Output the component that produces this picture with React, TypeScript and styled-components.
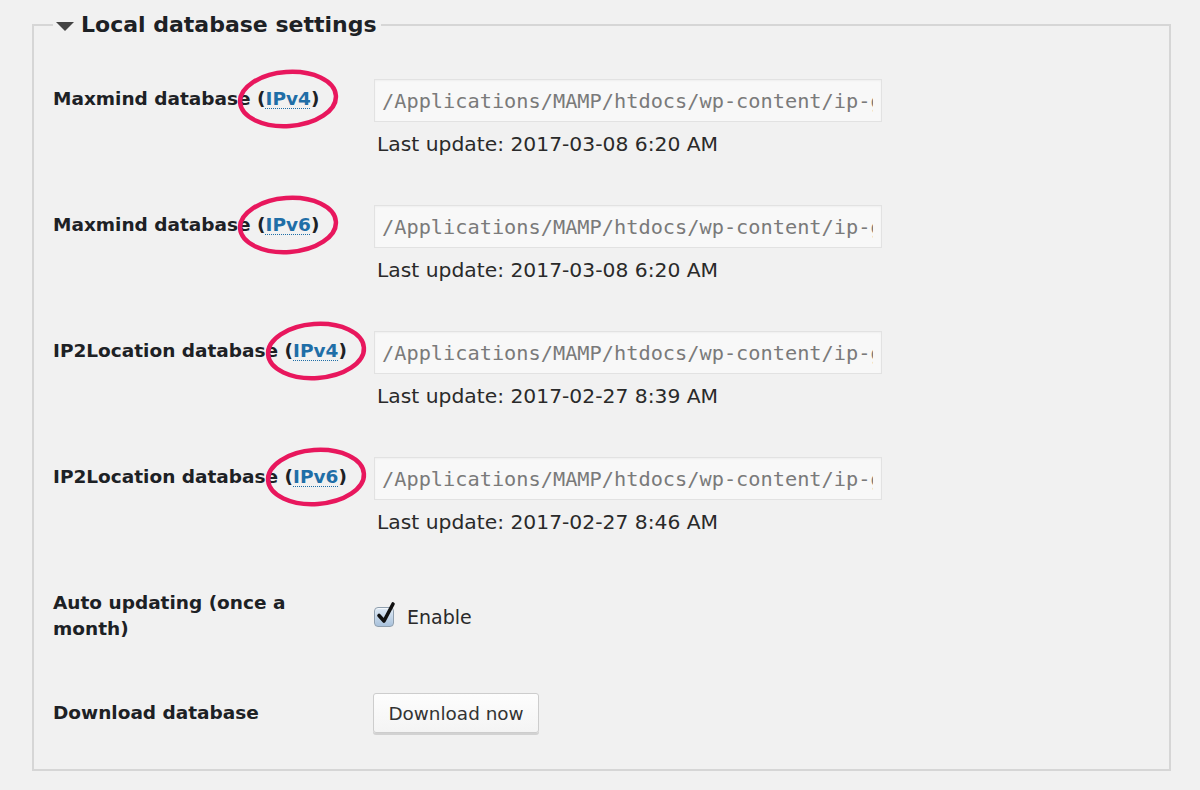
import React from "react";
import styled, { createGlobalStyle } from "styled-components";

const Global = createGlobalStyle`
  html, body { margin: 0; padding: 0; background: #f1f1f1; }
  body { font-family: "DejaVu Sans", "Liberation Sans", sans-serif; color: #23282d; }
`;

const Page = styled.div`
  padding: 11px 0 0 32px;
  width: 1139px;
`;

const Fieldset = styled.fieldset`
  margin: 0;
  border: 2px solid #d6d6d6;
  padding: 40px 20px 36px 19px;
  min-width: 0;
`;

const Legend = styled.legend`
  display: flex;
  align-items: center;
  gap: 7px;
  padding: 0 4px 0 3px;
  font-size: 22px;
  line-height: 28px;
  font-weight: bold;
  color: #1d2125;
`;

const Triangle = styled.span`
  width: 0;
  height: 0;
  border-left: 9px solid transparent;
  border-right: 9px solid transparent;
  border-top: 9px solid #444;
  margin-top: 2px;
`;

const Rows = styled.div`
  display: flex;
  flex-direction: column;
  gap: 49px;
`;

const Row = styled.div<{ $extraTop?: number }>`
  display: flex;
  align-items: flex-start;
  margin-top: ${(p) => p.$extraTop ?? 0}px;
`;

const Label = styled.div<{ $maxWidth?: number }>`
  width: 321px;
  flex: none;
  box-sizing: border-box;
  padding-top: 7px;
  font-size: 18.5px;
  line-height: 26px;
  font-weight: bold;
  color: #1d2125;
  white-space: ${(p) => (p.$maxWidth ? "normal" : "nowrap")};
  & > span.inner {
    display: inline-block;
    max-width: ${(p) => (p.$maxWidth ? `${p.$maxWidth}px` : "none")};
  }
`;

const LinkWrap = styled.span`
  position: relative;
  display: inline-block;
`;

const Link = styled.a`
  color: #1f6ea7;
  text-decoration: underline dotted #1f6ea7;
  text-underline-offset: 3px;
  text-decoration-thickness: 1px;
`;

const Circle = styled.svg`
  position: absolute;
  left: 50%;
  top: 50%;
  width: 104px;
  height: 64px;
  transform: translate(-50%, -50%) rotate(-4deg);
  overflow: visible;
  pointer-events: none;
`;

const Field = styled.div<{ $padTop?: number }>`
  display: flex;
  flex-direction: column;
  padding-top: ${(p) => p.$padTop ?? 0}px;
`;

const PathInput = styled.input`
  box-sizing: border-box;
  width: 508px;
  height: 43px;
  margin: 0;
  padding: 0 8px 0 7px;
  border: 1px solid #e2e2e2;
  background: #f8f8f8;
  font-family: "DejaVu Sans Mono", "Liberation Mono", monospace;
  font-size: 20.3px;
  color: #7a7a7a;
  outline: none;
  box-shadow: inset 0 1px 2px rgba(0, 0, 0, 0.04);
`;

const Updated = styled.div`
  margin-top: 10px;
  margin-left: 3px;
  font-size: 20.3px;
  line-height: 24px;
  color: #2a2a2a;
`;

const CheckLine = styled.label`
  display: flex;
  align-items: center;
  gap: 13px;
  height: 28px;
  font-size: 19px;
  color: #2a2a2a;
`;

const Box = styled.span`
  position: relative;
  display: inline-block;
  width: 20px;
  height: 20px;
  box-sizing: border-box;
  border: 1px solid #8f9fae;
  border-radius: 4px;
  background: linear-gradient(#dfeaf5, #a9c2dc);
  box-shadow: inset 0 1px 1px rgba(255, 255, 255, 0.7);
`;

const Tick = styled.svg`
  position: absolute;
  left: 1px;
  top: -6px;
  width: 20px;
  height: 24px;
  overflow: visible;
`;

const Button = styled.button`
  box-sizing: border-box;
  width: 166px;
  height: 40px;
  margin: 0 0 0 -1px;
  padding: 0;
  border: 1px solid #cdcdcd;
  border-radius: 3px;
  background: linear-gradient(#fdfdfd, #f4f4f4);
  box-shadow: 0 2px 0 #d2d2d2;
  font-family: "DejaVu Sans", "Liberation Sans", sans-serif;
  font-size: 18.4px;
  color: #333;
`;

const PATH = "/Applications/MAMP/htdocs/wp-content/ip-geo-block/database/GeoLite2.dat";

type DbRow = { name: string; ver: string; updated: string };

const rows: DbRow[] = [
  { name: "Maxmind database", ver: "IPv4", updated: "2017-03-08 6:20 AM" },
  { name: "Maxmind database", ver: "IPv6", updated: "2017-03-08 6:20 AM" },
  { name: "IP2Location database", ver: "IPv4", updated: "2017-02-27 8:39 AM" },
  { name: "IP2Location database", ver: "IPv6", updated: "2017-02-27 8:46 AM" },
];

function Ring() {
  return (
    <Circle viewBox="0 0 104 64">
      <ellipse cx="52" cy="32" rx="48" ry="27" fill="none" stroke="#e8175d" strokeWidth="4.5" />
    </Circle>
  );
}

export default function App() {
  return (
    <>
      <Global />
      <Page>
        <Fieldset>
          <Legend>
            <Triangle />
            Local database settings
          </Legend>
          <Rows>
            {rows.map((r, i) => (
              <Row key={i}>
                <Label>
                  {r.name} (
                  <LinkWrap>
                    <Link href="#">{r.ver}</Link>
                    <Ring />
                  </LinkWrap>
                  )
                </Label>
                <Field>
                  <PathInput readOnly value={PATH} />
                  <Updated>Last update: {r.updated}</Updated>
                </Field>
              </Row>
            ))}
            <Row>
              <Label $maxWidth={250}>
                <span className="inner">Auto updating (once a month)</span>
              </Label>
              <Field $padTop={20}>
                <CheckLine>
                  <Box>
                    <Tick viewBox="0 0 20 24">
                      <path d="M3 13.5 L8 19 L17 2" fill="none" stroke="#111" strokeWidth="3.6" strokeLinecap="round" strokeLinejoin="round" />
                    </Tick>
                  </Box>
                  Enable
                </CheckLine>
              </Field>
            </Row>
            <Row $extraTop={2}>
              <Label>Download database</Label>
              <Field>
                <Button type="button">Download now</Button>
              </Field>
            </Row>
          </Rows>
        </Fieldset>
      </Page>
    </>
  );
}
